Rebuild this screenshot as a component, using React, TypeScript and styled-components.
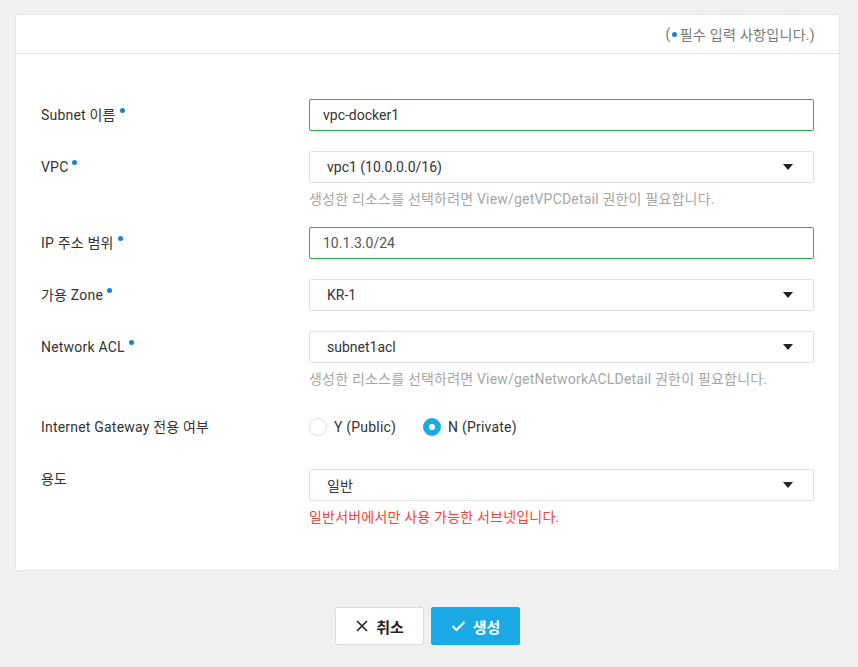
import styled, { createGlobalStyle } from "styled-components";

const GlobalStyle = createGlobalStyle`
	body {
		margin: 0;
		background: #f0f0f0;
		font-family: Roboto, "Noto Sans CJK KR", sans-serif;
		font-size: 14px;
		color: #333;
	}
`;

const Page = styled.div`
	padding: 14px 18px 0 15px;
`;

const Card = styled.section`
	background: #fff;
	border: 1px solid #e6e6e6;
	border-radius: 3px;
`;

const CardHeader = styled.div`
	height: 38px;
	display: flex;
	align-items: center;
	justify-content: flex-end;
	padding-right: 24px;
	border-bottom: 1px solid #e4e4e4;
	color: #777;
	font-size: 14px;
	letter-spacing: 0.3px;
`;

const Form = styled.div`
	padding: 45px 24px 45px 25px;
	display: flex;
	flex-direction: column;
	gap: 20px;
`;

const Row = styled.div`
	display: grid;
	grid-template-columns: 268px 505px;
`;

const Label = styled.div<{ $top?: boolean; $tall?: boolean }>`
	line-height: ${(p) => (p.$tall ? "40px" : "32px")};
	height: ${(p) => (p.$tall ? "40px" : "32px")};
	color: #333;
	letter-spacing: 0.2px;
	margin-top: ${(p) => (p.$top ? "-6px" : "0")};
`;

const Dot = styled.span`
	display: inline-block;
	width: 5px;
	height: 5px;
	border-radius: 50%;
	background: #1a7fe0;
	margin-left: 4px;
	vertical-align: 7px;
`;

const HeaderDot = styled(Dot)`
	margin: 0 3px 0 1px;
	vertical-align: 5px;
`;

const Field = styled.div`
	display: flex;
	flex-direction: column;
`;

const Input = styled.div<{ $muted?: boolean }>`
	height: 30px;
	line-height: 30px;
	border: 1px solid #23b84a;
	border-radius: 2px;
	padding: 0 13px;
	color: ${(p) => (p.$muted ? "#555" : "#333")};
`;

const Select = styled.div`
	height: 30px;
	border: 1px solid #e2e2e2;
	border-radius: 2px;
	padding: 0 20px 0 17px;
	display: flex;
	align-items: center;
	justify-content: space-between;
	color: #333;
`;

const Caret = styled.span`
	width: 0;
	height: 0;
	border-left: 5px solid transparent;
	border-right: 5px solid transparent;
	border-top: 6px solid #222;
`;

const Help = styled.div<{ $error?: boolean }>`
	margin-top: 8px;
	line-height: 16px;
	font-size: 14px;
	letter-spacing: 0.2px;
	color: ${(p) => (p.$error ? "#f4443a" : "#a6a6a6")};
`;

const RadioGroup = styled.div`
	display: flex;
	align-items: center;
	gap: 27px;
	height: 40px;
	padding-bottom: 2px;
`;

const Radio = styled.label`
	display: flex;
	align-items: center;
	gap: 7px;
	color: #333;
	letter-spacing: 0.2px;
`;

const RadioMark = styled.span<{ $checked?: boolean }>`
	box-sizing: border-box;
	width: 18px;
	height: 18px;
	border-radius: 50%;
	border: ${(p) => (p.$checked ? "6px solid #1aabe6" : "1px solid #dcdcdc")};
	background: #fff;
`;

const Actions = styled.div`
	display: flex;
	justify-content: center;
	gap: 7px;
	padding-top: 36px;
`;

const Button = styled.button<{ $primary?: boolean }>`
	width: 89px;
	height: 38px;
	display: flex;
	align-items: center;
	justify-content: center;
	gap: 7px;
	border-radius: 2px;
	font-family: Roboto, "Noto Sans CJK KR", sans-serif;
	font-size: 15px;
	font-weight: 700;
	border: 1px solid ${(p) => (p.$primary ? "#1aabe6" : "#dedede")};
	background: ${(p) => (p.$primary ? "#1aabe6" : "#fff")};
	color: ${(p) => (p.$primary ? "#fff" : "#222")};
`;

function App() {
	return (
		<>
			<GlobalStyle />
			<Page>
				<Card>
					<CardHeader>
						(<HeaderDot />필수 입력 사항입니다.)
					</CardHeader>
					<Form>
						<Row>
							<Label>
								Subnet 이름<Dot />
							</Label>
							<Input>vpc-docker1</Input>
						</Row>
						<Row>
							<Label>
								VPC<Dot />
							</Label>
							<Field>
								<Select>
									vpc1 (10.0.0.0/16)
									<Caret />
								</Select>
								<Help>생성한 리소스를 선택하려면 View/getVPCDetail 권한이 필요합니다.</Help>
							</Field>
						</Row>
						<Row>
							<Label>
								IP 주소 범위<Dot />
							</Label>
							<Input $muted>10.1.3.0/24</Input>
						</Row>
						<Row>
							<Label>
								가용 Zone<Dot />
							</Label>
							<Select>
								KR-1
								<Caret />
							</Select>
						</Row>
						<Row>
							<Label>
								Network ACL<Dot />
							</Label>
							<Field>
								<Select>
									subnet1acl
									<Caret />
								</Select>
								<Help>생성한 리소스를 선택하려면 View/getNetworkACLDetail 권한이 필요합니다.</Help>
							</Field>
						</Row>
						<Row>
							<Label $tall>Internet Gateway 전용 여부</Label>
							<RadioGroup>
								<Radio>
									<RadioMark />Y (Public)
								</Radio>
								<Radio>
									<RadioMark $checked />N (Private)
								</Radio>
							</RadioGroup>
						</Row>
						<Row>
							<Label $top>용도</Label>
							<Field>
								<Select>
									일반
									<Caret />
								</Select>
								<Help $error>일반서버에서만 사용 가능한 서브넷입니다.</Help>
							</Field>
						</Row>
					</Form>
				</Card>
				<Actions>
					<Button>
						<svg width="14" height="14" viewBox="0 0 14 14">
							<path d="M2 2L12 12M12 2L2 12" stroke="#222" strokeWidth="1.6" />
						</svg>
						취소
					</Button>
					<Button $primary>
						<svg width="15" height="12" viewBox="0 0 15 12">
							<path d="M1.5 6L5.5 10L13.5 2" stroke="#fff" strokeWidth="2" fill="none" />
						</svg>
						생성
					</Button>
				</Actions>
			</Page>
		</>
	);
}

export default App;
